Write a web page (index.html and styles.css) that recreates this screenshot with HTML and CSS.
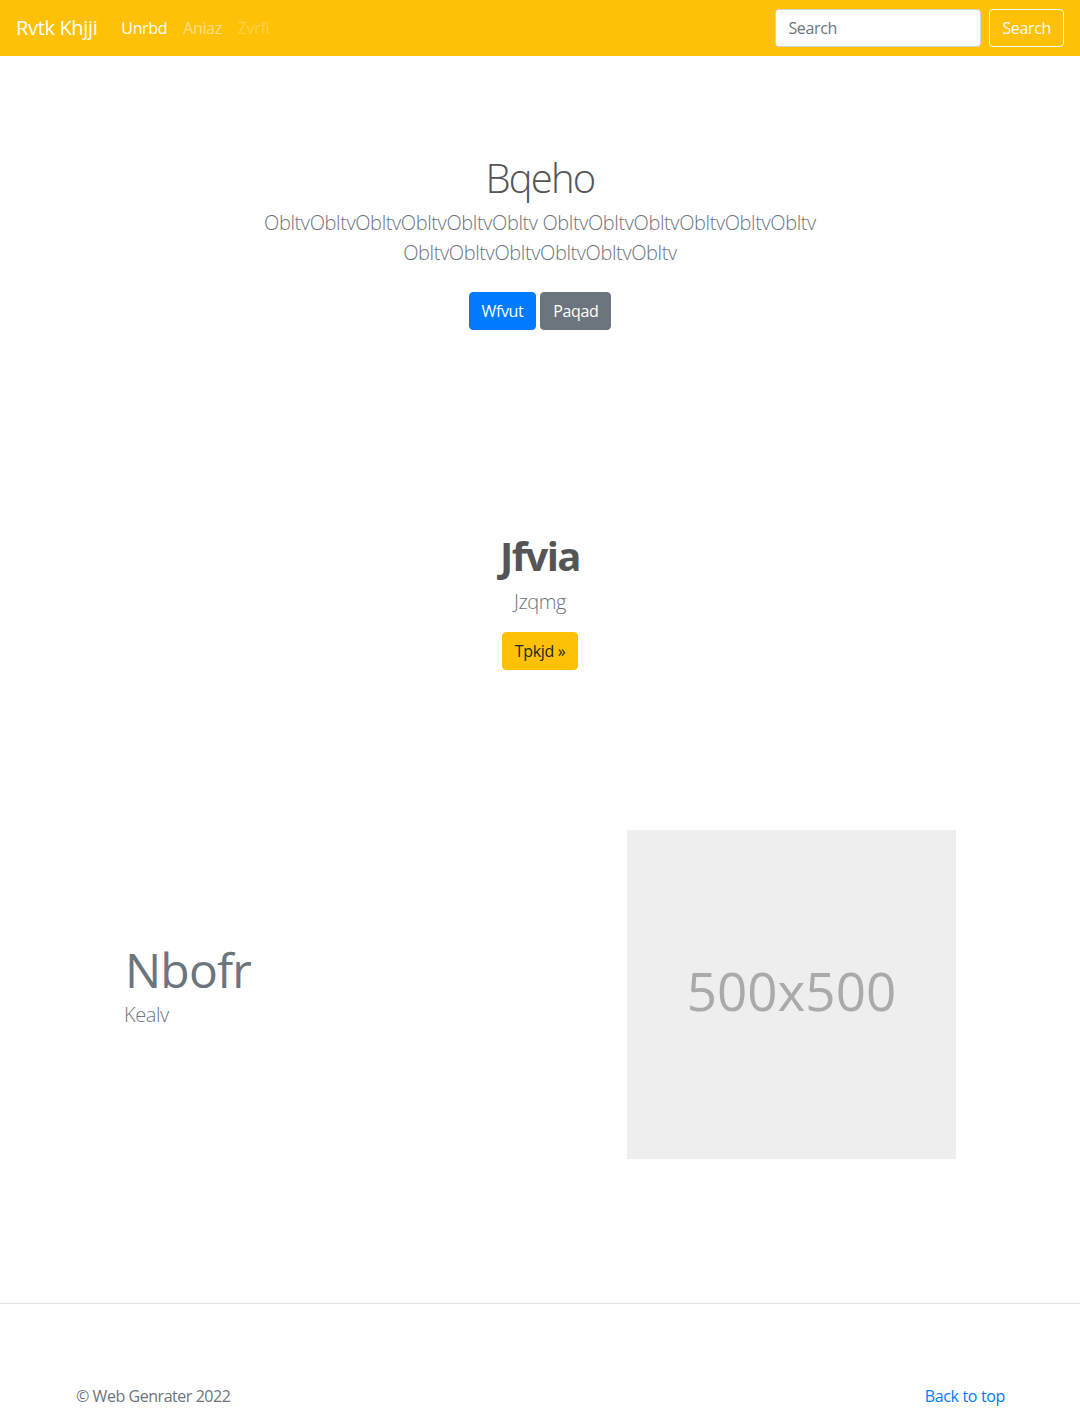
FILE: index.html
```html
<!DOCTYPE html>
<html lang="en">
<head>
<meta charset="utf-8">
<title>Rvtk Khjji</title>
<link rel="stylesheet" href="styles.css">
</head>
<body>
<header class="navbar">
  <a class="brand" href="#">Rvtk Khjji</a>
  <nav class="nav">
    <a class="nav-link active" href="#">Unrbd</a>
    <a class="nav-link" href="#">Aniaz</a>
    <a class="nav-link disabled" href="#">Zvrfi</a>
  </nav>
  <form class="search">
    <input class="search-input" type="text" placeholder="Search">
    <button class="btn btn-outline-light" type="button">Search</button>
  </form>
</header>

<main>
  <section class="hero">
    <h1 class="hero-title">Bqeho</h1>
    <p class="lead hero-lead">ObltvObltvObltvObltvObltvObltv ObltvObltvObltvObltvObltvObltv ObltvObltvObltvObltvObltvObltv</p>
    <p class="hero-actions">
      <a class="btn btn-primary" href="#">Wfvut</a>
      <a class="btn btn-secondary" href="#">Paqad</a>
    </p>
  </section>

  <section class="callout">
    <h2 class="callout-title">Jfvia</h2>
    <p class="lead callout-lead">Jzqmg</p>
    <a class="btn btn-warning" href="#">Tpkjd »</a>
  </section>

  <section class="feature">
    <div class="feature-text">
      <h2 class="feature-title">Nbofr</h2>
      <p class="lead feature-lead">Kealv</p>
    </div>
    <div class="placeholder">500x500</div>
  </section>
</main>

<footer class="footer">
  <div class="footer-inner">
    <p class="copy">© Web Genrater 2022</p>
    <a class="back" href="#">Back to top</a>
  </div>
</footer>
</body>
</html>
```

FILE: styles.css
```css
* { box-sizing: border-box; }
html, body { margin: 0; padding: 0; }
body {
  font-family: "Open Sans", "Noto Sans", sans-serif;
  font-size: 16px;
  line-height: 1.5;
  letter-spacing: -0.35px;
  color: #212529;
  background: #fff;
}
a { text-decoration: none; }

.navbar {
  display: flex;
  align-items: center;
  height: 56px;
  padding: 8px 16px;
  background: #ffc107;
}
.brand {
  color: #fff;
  font-size: 20px;
  line-height: 30px;
  letter-spacing: -0.35px;
  margin-right: 16px;
}
.nav { display: flex; }
.nav-link {
  padding: 8px;
  color: rgba(255, 255, 255, 0.5);
  font-size: 16px;
  line-height: 24px;
}
.nav-link.active { color: #fff; }
.nav-link.disabled { color: rgba(255, 255, 255, 0.25); }
.search {
  margin-left: auto;
  display: flex;
  align-items: center;
}
.search-input {
  width: 206px;
  height: 38px;
  padding: 6px 12px;
  border: 1px solid #ced4da;
  border-radius: 4px;
  font: inherit;
  font-size: 16px;
  letter-spacing: -0.35px;
  color: #495057;
  background: #fff;
}
.search-input::placeholder { color: #6c757d; }

.btn {
  display: inline-block;
  height: 38px;
  padding: 6px 12px;
  border: 1px solid transparent;
  border-radius: 4px;
  font-family: inherit;
  font-size: 16px;
  line-height: 24px;
  letter-spacing: -0.35px;
  vertical-align: middle;
  background: transparent;
}
.btn-outline-light {
  margin-left: 8px;
  color: #f8f9fa;
  border-color: #f8f9fa;
}
.btn-primary { background: #007bff; border-color: #007bff; color: #fff; }
.btn-secondary { background: #6c757d; border-color: #6c757d; color: #fff; }
.btn-warning { background: #ffc107; border-color: #ffc107; color: #212529; }

.lead {
  font-size: 20px;
  font-weight: 300;
  line-height: 30px;
  letter-spacing: -0.4px;
  color: #6c757d;
  margin: 0;
}

.hero {
  text-align: center;
  padding-top: 98px;
}
.hero-title {
  margin: 0 0 6px;
  font-size: 40px;
  font-weight: 300;
  line-height: 48px;
  letter-spacing: -1.8px;
  color: #555;
}
.hero-lead {
  max-width: 610px;
  margin: 0 auto 24px;
}
.hero-actions { margin: 0; }

.callout {
  text-align: center;
  margin-top: 202px;
}
.callout-title {
  margin: 0 0 7px;
  font-size: 40px;
  font-weight: 700;
  line-height: 48px;
  letter-spacing: -1.6px;
  color: #555;
}
.callout-lead { margin-bottom: 15px; }

.feature {
  width: 960px;
  margin: 160px auto 0;
  padding: 0 64px;
  display: flex;
  align-items: center;
}
.feature-text {
  flex: 1;
  padding-bottom: 18px;
}
.feature-title {
  margin: 0 0 0 1px;
  font-size: 48px;
  font-weight: 400;
  line-height: 58px;
  letter-spacing: -0.8px;
  color: #6c757d;
}
.feature-lead { margin-top: 1px; }
.placeholder {
  width: 329px;
  height: 329px;
  padding-bottom: 8px;
  background: #eee;
  color: #aaa;
  font-size: 53px;
  letter-spacing: 0;
  display: flex;
  align-items: center;
  justify-content: center;
}

.footer {
  margin-top: 144px;
  border-top: 1px solid #e5e5e5;
  padding-top: 80px;
}
.footer-inner {
  width: 960px;
  margin: 0 auto;
  padding: 0 15px;
  display: flex;
  justify-content: space-between;
}
.copy { margin: 0 0 0 1px; color: #6c757d; letter-spacing: -0.45px; }
.back { color: #007bff; }
```
